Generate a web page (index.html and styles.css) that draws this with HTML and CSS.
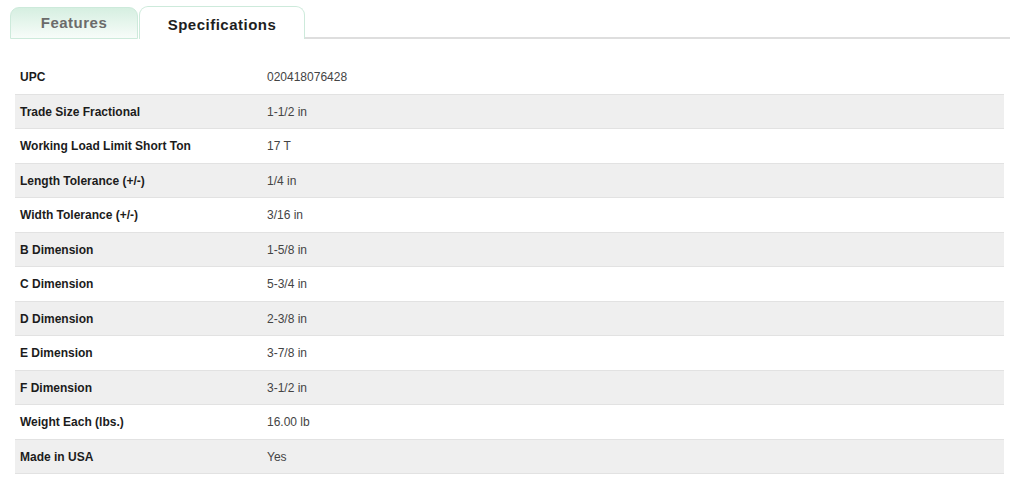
FILE: index.html
```html
<!DOCTYPE html>
<html>
<head>
<meta charset="utf-8">
<link rel="stylesheet" href="styles.css">
</head>
<body>
<div class="page">
  <div class="tabs">
    <div class="tab tab-inactive">Features</div>
    <div class="tab tab-active">Specifications</div>
    <div class="tab-line"></div>
  </div>
  <div class="specs">
    <div class="row"><div class="label">UPC</div><div class="value">020418076428</div></div>
    <div class="row alt"><div class="label">Trade Size Fractional</div><div class="value">1-1/2 in</div></div>
    <div class="row"><div class="label">Working Load Limit Short Ton</div><div class="value">17 T</div></div>
    <div class="row alt"><div class="label">Length Tolerance (+/-)</div><div class="value">1/4 in</div></div>
    <div class="row"><div class="label">Width Tolerance (+/-)</div><div class="value">3/16 in</div></div>
    <div class="row alt"><div class="label">B Dimension</div><div class="value">1-5/8 in</div></div>
    <div class="row"><div class="label">C Dimension</div><div class="value">5-3/4 in</div></div>
    <div class="row alt"><div class="label">D Dimension</div><div class="value">2-3/8 in</div></div>
    <div class="row"><div class="label">E Dimension</div><div class="value">3-7/8 in</div></div>
    <div class="row alt"><div class="label">F Dimension</div><div class="value">3-1/2 in</div></div>
    <div class="row"><div class="label">Weight Each (lbs.)</div><div class="value">16.00 lb</div></div>
    <div class="row alt last"><div class="label">Made in USA</div><div class="value">Yes</div></div>
  </div>
</div>
</body>
</html>
```

FILE: styles.css
```css
* { box-sizing: border-box; }
html, body { margin: 0; padding: 0; background: #fff; }
body { font-family: "Liberation Sans", Arial, sans-serif; }
.page { padding: 6px 13px 0 10px; }
.tabs {
  display: flex;
  align-items: flex-end;
  height: 33px;
}
.tab {
  font-weight: bold;
  font-size: 15px;
  letter-spacing: 0.5px;
  text-align: center;
  border: 1px solid #cdeadb;
  border-bottom: none;
  border-radius: 9px 9px 0 0;
}
.tab-inactive {
  width: 128px;
  height: 32px;
  padding-top: 6px;
  color: #6b6b6b;
  background: linear-gradient(to bottom, #d6efe1 0%, #f7fcf9 100%);
  border-bottom: 1px solid #cdeadb;
}
.tab-active {
  width: 166px;
  height: 33px;
  margin-left: 1px;
  padding-top: 9px;
  color: #1e1e1e;
  background: #fff;
}
.tab-line {
  flex: 1;
  height: 2px;
  background: #dedede;
}
.specs {
  margin: 21px 6px 0 5px;
}
.row {
  display: flex;
  align-items: center;
  height: 34.5px;
  padding-top: 1px;
  border-bottom: 1px solid #e2e2e2;
  font-size: 12px;
}
.row.alt { background: #efefef; }
.label {
  width: 252px;
  padding-left: 5px;
  font-weight: bold;
  color: #1c1c1c;
}
.value {
  color: #444;
}
```
